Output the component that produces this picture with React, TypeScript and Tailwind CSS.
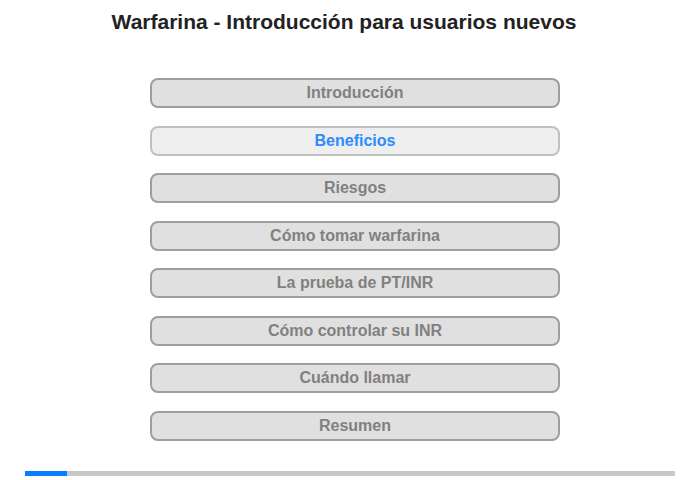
import React from "react";

const items = [
  "Introducción",
  "Beneficios",
  "Riesgos",
  "Cómo tomar warfarina",
  "La prueba de PT/INR",
  "Cómo controlar su INR",
  "Cuándo llamar",
  "Resumen",
];

export default function App() {
  return (
    <div
      className="w-[700px] h-[480px] bg-white flex flex-col items-start relative"
      style={{ fontFamily: '"Liberation Sans", Arial, sans-serif' }}
    >
      <h1 className="mt-[10px] ml-[110px] w-[468px] h-[24px] leading-[24px] text-[21px] font-bold text-[#222222] text-center whitespace-nowrap">
        Warfarina - Introducción para usuarios nuevos
      </h1>
      <div className="mt-[44px] ml-[150px] flex flex-col gap-[17.5px] w-[410px]">
        {items.map((t, i) => {
          const active = i === 1;
          return (
            <div
              key={t}
              className={
                active
                  ? "h-[30px] rounded-[8px] border-2 border-[#c0c0c0] bg-[#eeeeee] flex items-center justify-center text-[16px] font-bold text-[#2b8cff]"
                  : "h-[30px] rounded-[8px] border-2 border-[#9e9e9e] bg-[#e0e0e0] flex items-center justify-center text-[16px] font-bold text-[#808080]"
              }
            >
              {t}
            </div>
          );
        })}
      </div>
      <div className="mt-auto mb-[4px] ml-[25px] w-[650px] h-[5px] bg-[#c8c8c8] flex">
        <div className="w-[42px] h-full bg-[#0a7cff]" />
      </div>
    </div>
  );
}
